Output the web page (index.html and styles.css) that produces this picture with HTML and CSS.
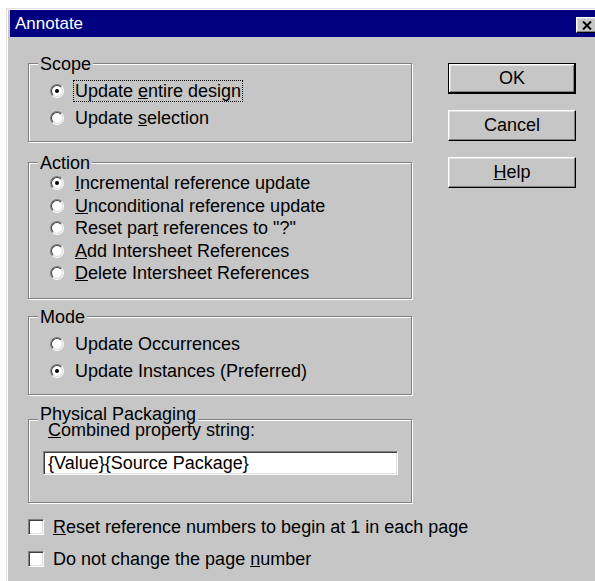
FILE: index.html
```html
<!DOCTYPE html>
<html lang="en">
<head>
<meta charset="utf-8">
<title>Annotate</title>
<link rel="stylesheet" href="styles.css">
</head>
<body>
<div class="window">
  <div class="titlebar">
    <span class="title">Annotate</span>
    <span class="close-btn">
      <svg width="10" height="9" viewBox="0 0 10 9"><path d="M1 0.5 L9 8.5 M9 0.5 L1 8.5" stroke="#000" stroke-width="2" fill="none"/></svg>
    </span>
  </div>
  <div class="client">
    <div class="main">
      <div class="group group-pair">
        <span class="group-label">Scope</span>
        <div class="opt"><span class="radio checked"></span><span class="focus">Update <u>e</u>ntire design</span></div>
        <div class="opt"><span class="radio"></span><span>Update <u>s</u>election</span></div>
      </div>

      <div class="group group-action">
        <span class="group-label">Action</span>
        <div class="opt opt-tight"><span class="radio checked"></span><span><u>I</u>ncremental reference update</span></div>
        <div class="opt opt-tight"><span class="radio"></span><span><u>U</u>nconditional reference update</span></div>
        <div class="opt opt-tight"><span class="radio"></span><span>Reset par<u>t</u> references to "?"</span></div>
        <div class="opt opt-tight"><span class="radio"></span><span><u>A</u>dd Intersheet References</span></div>
        <div class="opt opt-tight"><span class="radio"></span><span><u>D</u>elete Intersheet References</span></div>
      </div>

      <div class="group group-pair group-mode">
        <span class="group-label">Mode</span>
        <div class="opt"><span class="radio"></span><span>Update Occurrences</span></div>
        <div class="opt"><span class="radio checked"></span><span>Update Instances (Preferred)</span></div>
      </div>

      <div class="group group-pack">
        <span class="group-label group-label-high">Physical Packaging</span>
        <div class="field-label"><u>C</u>ombined property string:</div>
        <div class="textbox">{Value}{Source Package}</div>
      </div>

      <div class="checks">
        <div class="check"><span class="checkbox"></span><span><u>R</u>eset reference numbers to begin at 1 in each page</span></div>
        <div class="check"><span class="checkbox"></span><span>Do not change the page <u>n</u>umber</span></div>
      </div>
    </div>

    <div class="buttons">
      <button class="btn btn-default" type="button">OK</button>
      <button class="btn" type="button">Cancel</button>
      <button class="btn" type="button"><u>H</u>elp</button>
    </div>
  </div>
</div>
</body>
</html>
```
FILE: styles.css
```css
html, body {
  margin: 0;
  padding: 0;
  background: #ffffff;
  overflow: hidden;
}

body {
  width: 595px;
  height: 581px;
  font-family: "Liberation Sans", Arial, sans-serif;
  font-size: 18px;
  color: #000;
}

/* dialog frame */
.window {
  margin: 8px 0 0 6px;
  width: 596px;
  height: 600px;
  box-sizing: border-box;
  background: #c6c6c6;
  border-top: 1px solid #dfdfdf;
  border-left: 1px solid #dfdfdf;
  box-shadow: inset 1px 1px 0 #ffffff;
  padding: 1px 3px 0 3px;
}

.titlebar {
  height: 27px;
  background: #000080;
  display: flex;
  justify-content: space-between;
  align-items: flex-start;
}

.title {
  color: #fff;
  font-size: 17px;
  line-height: 27px;
  padding-left: 5px;
}

.close-btn {
  width: 21px;
  height: 16px;
  margin: 7px 2px 0 0;
  box-sizing: border-box;
  background: #c6c6c6;
  border: 1px solid;
  border-color: #fff #000 #000 #fff;
  box-shadow: inset -1px -1px 0 #808080, inset 1px 1px 0 #dfdfdf;
  display: flex;
  align-items: center;
  justify-content: center;
}

/* client area */
.client {
  display: flex;
  gap: 36px;
  padding: 26px 0 0 18px;
}

.main {
  width: 384px;
  display: flex;
  flex-direction: column;
}

/* etched group box */
.group {
  position: relative;
  box-sizing: border-box;
  width: 384px;
  border: 1px solid #808080;
  box-shadow: inset 1px 1px 0 #fff, 1px 1px 0 #fff;
}

.group-label {
  position: absolute;
  top: -10px;
  left: 9px;
  padding: 0 2px;
  line-height: 20px;
  background: #c6c6c6;
}

.group-label-high {
  top: -13px;
  line-height: 15px;
}

.group-pair {
  padding: 13px 0 10px 21px;
}

.group-action {
  margin-top: 20px;
  padding: 9px 0 13.5px 21px;
}

.group-mode {
  margin-top: 17px;
}

.group-pack {
  margin-top: 24px;
  padding: 3px 0 27px 14px;
}

/* option rows */
.opt {
  display: flex;
  align-items: center;
  gap: 11px;
  height: 27px;
  line-height: 20px;
  white-space: nowrap;
}

.opt-tight {
  height: 22.5px;
}

.radio {
  position: relative;
  flex: none;
  width: 14px;
  height: 14px;
  box-sizing: border-box;
  border-radius: 50%;
  border: 1px solid;
  border-color: #808080 #ffffff #ffffff #808080;
}

.radio::before {
  content: "";
  position: absolute;
  inset: 0;
  border-radius: 50%;
  border: 1px solid;
  border-color: #404040 #dfdfdf #dfdfdf #404040;
  background: #fff;
}

.radio.checked::after {
  content: "";
  position: absolute;
  left: 4px;
  top: 4px;
  width: 4px;
  height: 4px;
  border-radius: 50%;
  background: #000;
}

.focus {
  line-height: 18px;
  outline: 1px dotted #000;
  outline-offset: 1px;
}

/* packaging field */
.field-label {
  line-height: 15px;
  padding-left: 5px;
  white-space: nowrap;
}

.textbox {
  margin-top: 13px;
  width: 355px;
  height: 24px;
  box-sizing: border-box;
  background: #fff;
  border: 1px solid;
  border-color: #808080 #fff #fff #808080;
  box-shadow: inset 1px 1px 0 #404040, inset -1px -1px 0 #dfdfdf;
  padding-left: 4px;
  line-height: 22px;
  white-space: nowrap;
}

/* check boxes */
.checks {
  margin-top: 8px;
}

.check {
  display: flex;
  align-items: center;
  gap: 9px;
  height: 32px;
  white-space: nowrap;
}

.checkbox {
  flex: none;
  width: 16px;
  height: 16px;
  box-sizing: border-box;
  background: #fff;
  border: 1px solid;
  border-color: #808080 #fff #fff #808080;
  box-shadow: inset 1px 1px 0 #404040, inset -1px -1px 0 #dfdfdf;
}

/* push buttons */
.buttons {
  display: flex;
  flex-direction: column;
  gap: 16px;
}

.btn {
  width: 128px;
  height: 31px;
  box-sizing: border-box;
  margin: 0;
  padding: 0;
  font: inherit;
  color: #000;
  background: #c6c6c6;
  border: 1px solid;
  border-color: #fff #000 #000 #fff;
  box-shadow: inset -1px -1px 0 #808080, inset 1px 1px 0 #dfdfdf;
  line-height: 29px;
  text-align: center;
}

.btn-default {
  border-color: #000;
  box-shadow:
    inset -1px -1px 0 #000,
    inset 1px 1px 0 #fff,
    inset -2px -2px 0 #808080,
    inset 2px 2px 0 #dfdfdf;
}
```
